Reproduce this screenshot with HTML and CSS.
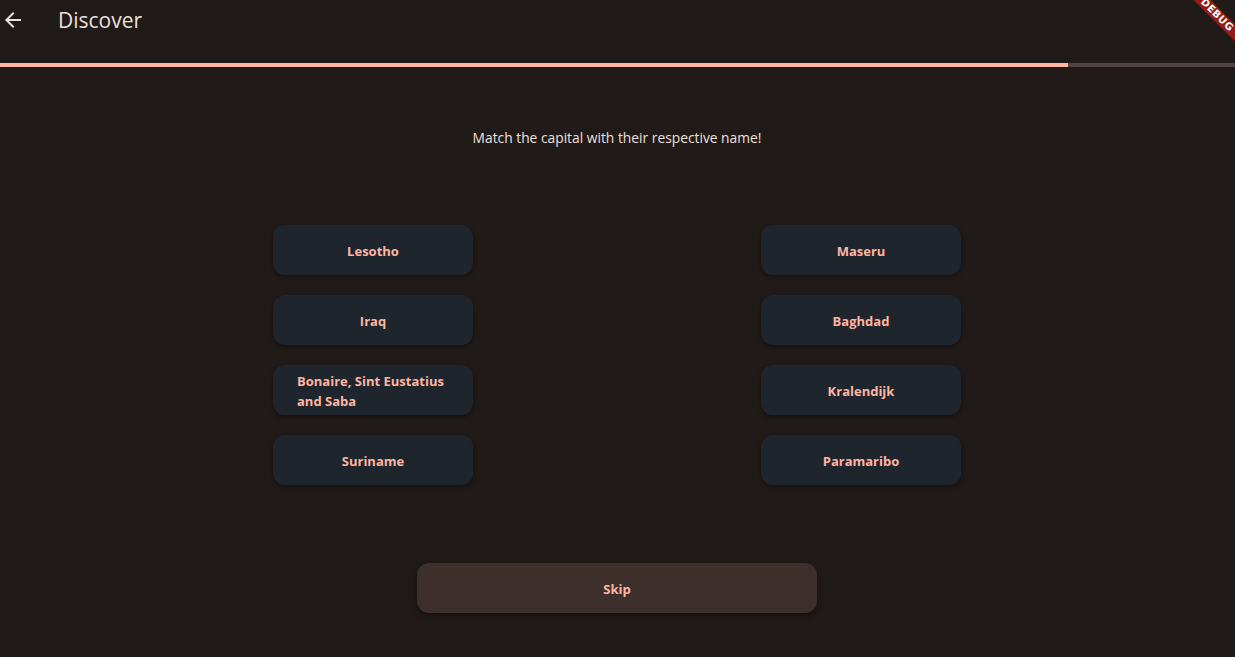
FILE: index.html
```html
<!DOCTYPE html>
<html>
<head>
<meta charset="utf-8">
<link rel="stylesheet" href="styles.css">
</head>
<body>
<div class="app">
  <header class="appbar">
    <svg class="back" viewBox="0 0 24 24" width="24" height="24"><path fill="#ede0dc" d="M20 11H7.83l5.59-5.59L12 4l-8 8 8 8 1.41-1.41L7.83 13H20v-2z"/></svg>
    <div class="title">Discover</div>
  </header>
  <div class="progress"><div class="progress-fill" style="width:1068px"></div></div>
  <main class="content">
    <p class="prompt">Match the capital with their respective name!</p>
    <div class="columns">
      <div class="col">
        <div class="card">Lesotho</div>
        <div class="card">Iraq</div>
        <div class="card wide">Bonaire, Sint Eustatius and Saba</div>
        <div class="card">Suriname</div>
      </div>
      <div class="col">
        <div class="card">Maseru</div>
        <div class="card">Baghdad</div>
        <div class="card">Kralendijk</div>
        <div class="card">Paramaribo</div>
      </div>
    </div>
    <div class="skip">Skip</div>
  </main>
  <div class="debug">DEBUG</div>
</div>
</body>
</html>
```
FILE: styles.css
```css
html, body {
  margin: 0;
  padding: 0;
  background: #201a18;
  font-family: "Open Sans", "Noto Sans", sans-serif;
}
.app {
  width: 1235px;
  height: 657px;
  position: relative;
  overflow: hidden;
  background: #201a18;
}
.appbar {
  height: 63px;
  display: flex;
  align-items: flex-start;
}
.back {
  margin: 8px 0 0 1px;
}
.title {
  margin: 5px 0 0 33px;
  font-size: 21px;
  color: #ede0dc;
  line-height: 30px;
}
.progress {
  height: 4px;
  background: #4d4340;
}
.progress-fill {
  height: 4px;
  background: #ffb5a0;
}
.content {
  display: flex;
  flex-direction: column;
  align-items: center;
  padding-right: 1px;
}
.prompt {
  margin: 61px 0 0 0;
  font-size: 13.8px;
  line-height: 20px;
  color: #ede0dc;
}
.columns {
  margin-top: 77px;
  display: flex;
  gap: 288px;
}
.col {
  display: flex;
  flex-direction: column;
  gap: 20px;
}
.card {
  width: 200px;
  height: 50px;
  box-sizing: border-box;
  padding: 2px 24px 0;
  border-radius: 12px;
  background: #1f252d;
  color: #ffb5a0;
  font-weight: 700;
  font-size: 13px;
  line-height: 20px;
  display: flex;
  align-items: center;
  justify-content: center;
  box-shadow: 0 2px 4px rgba(0,0,0,0.35);
}
.card.wide {
  justify-content: flex-start;
}
.skip {
  margin-top: 78px;
  width: 400px;
  height: 50px;
  box-sizing: border-box;
  padding-top: 2px;
  border-radius: 12px;
  background: #3d2f2b;
  color: #ffb5a0;
  font-weight: 700;
  font-size: 13px;
  display: flex;
  align-items: center;
  justify-content: center;
  box-shadow: 0 3px 6px rgba(0,0,0,0.35);
}
.debug {
  position: absolute;
  top: 9px;
  right: -27px;
  width: 90px;
  height: 12px;
  background: rgba(183, 28, 28, 0.75);
  color: #fff;
  font-family: "DejaVu Sans", sans-serif;
  font-weight: 700;
  font-size: 10px;
  line-height: 12px;
  text-align: center;
  letter-spacing: 0.5px;
  transform: rotate(45deg);
}
```
